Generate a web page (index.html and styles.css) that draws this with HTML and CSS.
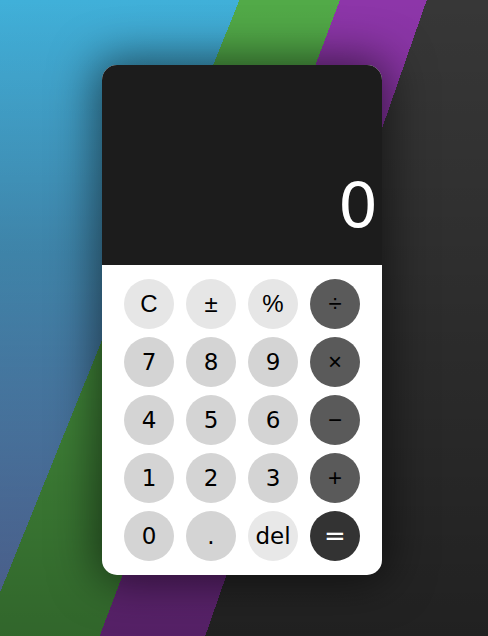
FILE: index.html
```html
<!DOCTYPE html>
<html lang="en">
<head>
<meta charset="utf-8">
<title>Calculator</title>
<link rel="stylesheet" href="styles.css">
</head>
<body>
<main class="calc">
  <div class="display"><span class="value">0</span></div>
  <div class="keys">
    <button class="key fn">C</button>
    <button class="key fn">±</button>
    <button class="key fn">%</button>
    <button class="key op">÷</button>
    <button class="key num">7</button>
    <button class="key num">8</button>
    <button class="key num">9</button>
    <button class="key op">×</button>
    <button class="key num">4</button>
    <button class="key num">5</button>
    <button class="key num">6</button>
    <button class="key op">−</button>
    <button class="key num">1</button>
    <button class="key num">2</button>
    <button class="key num">3</button>
    <button class="key op">+</button>
    <button class="key num">0</button>
    <button class="key num">.</button>
    <button class="key del">del</button>
    <button class="key eq">=</button>
  </div>
</main>
</body>
</html>
```
FILE: styles.css
```css
html, body {
  margin: 0;
  padding: 0;
}

body {
  min-height: 100vh;
  display: flex;
  align-items: center;
  justify-content: center;
  font-family: "DejaVu Sans", "Liberation Sans", sans-serif;
  background:
    linear-gradient(to bottom, rgba(0,0,0,0) 0%, rgba(0,0,0,0.4) 100%),
    linear-gradient(109.2deg, rgba(0,0,0,0) 403px, #373737 403px),
    linear-gradient(110.7deg, rgba(0,0,0,0) 318px, #8d36a9 318px),
    linear-gradient(112deg, rgba(0,0,0,0) 222px, #52aa48 222px),
    linear-gradient(to bottom, #40b0d9 0%, #4a9cc8 40%, #7a96de 100%);
}

.calc {
  width: 280px;
  margin: 4px 4px 0 0;
  border-radius: 15px;
  overflow: hidden;
  background: #ffffff;
  box-shadow: 0 0 45px 6px rgba(0, 0, 0, 0.55);
}

.display {
  height: 200px;
  background: #1c1c1c;
  display: flex;
  align-items: flex-end;
  justify-content: flex-end;
  padding: 0 4px 28px 0;
  box-sizing: border-box;
}

.value {
  color: #ffffff;
  font-family: "DejaVu Sans", sans-serif;
  font-size: 63px;
  line-height: 1;
}

.keys {
  display: grid;
  grid-template-columns: repeat(4, 50px);
  column-gap: 12px;
  row-gap: 8px;
  padding: 14px 22px;
}

.key {
  width: 50px;
  height: 50px;
  border: none;
  border-radius: 50%;
  padding: 0;
  display: flex;
  align-items: center;
  justify-content: center;
  color: #000000;
  font-family: "DejaVu Sans", sans-serif;
  font-size: 23px;
}

.fn {
  background: #e6e6e6;
  font-family: "Liberation Sans", Arial, sans-serif;
  font-size: 24px;
}

.num {
  background: #d4d4d4;
}

.del {
  background: #e8e8e8;
}

.op {
  background: #5a5a5a;
  font-family: "Liberation Sans", Arial, sans-serif;
  font-size: 24px;
}

.eq {
  background: #333333;
  color: #ffffff;
  font-size: 26px;
}
```
